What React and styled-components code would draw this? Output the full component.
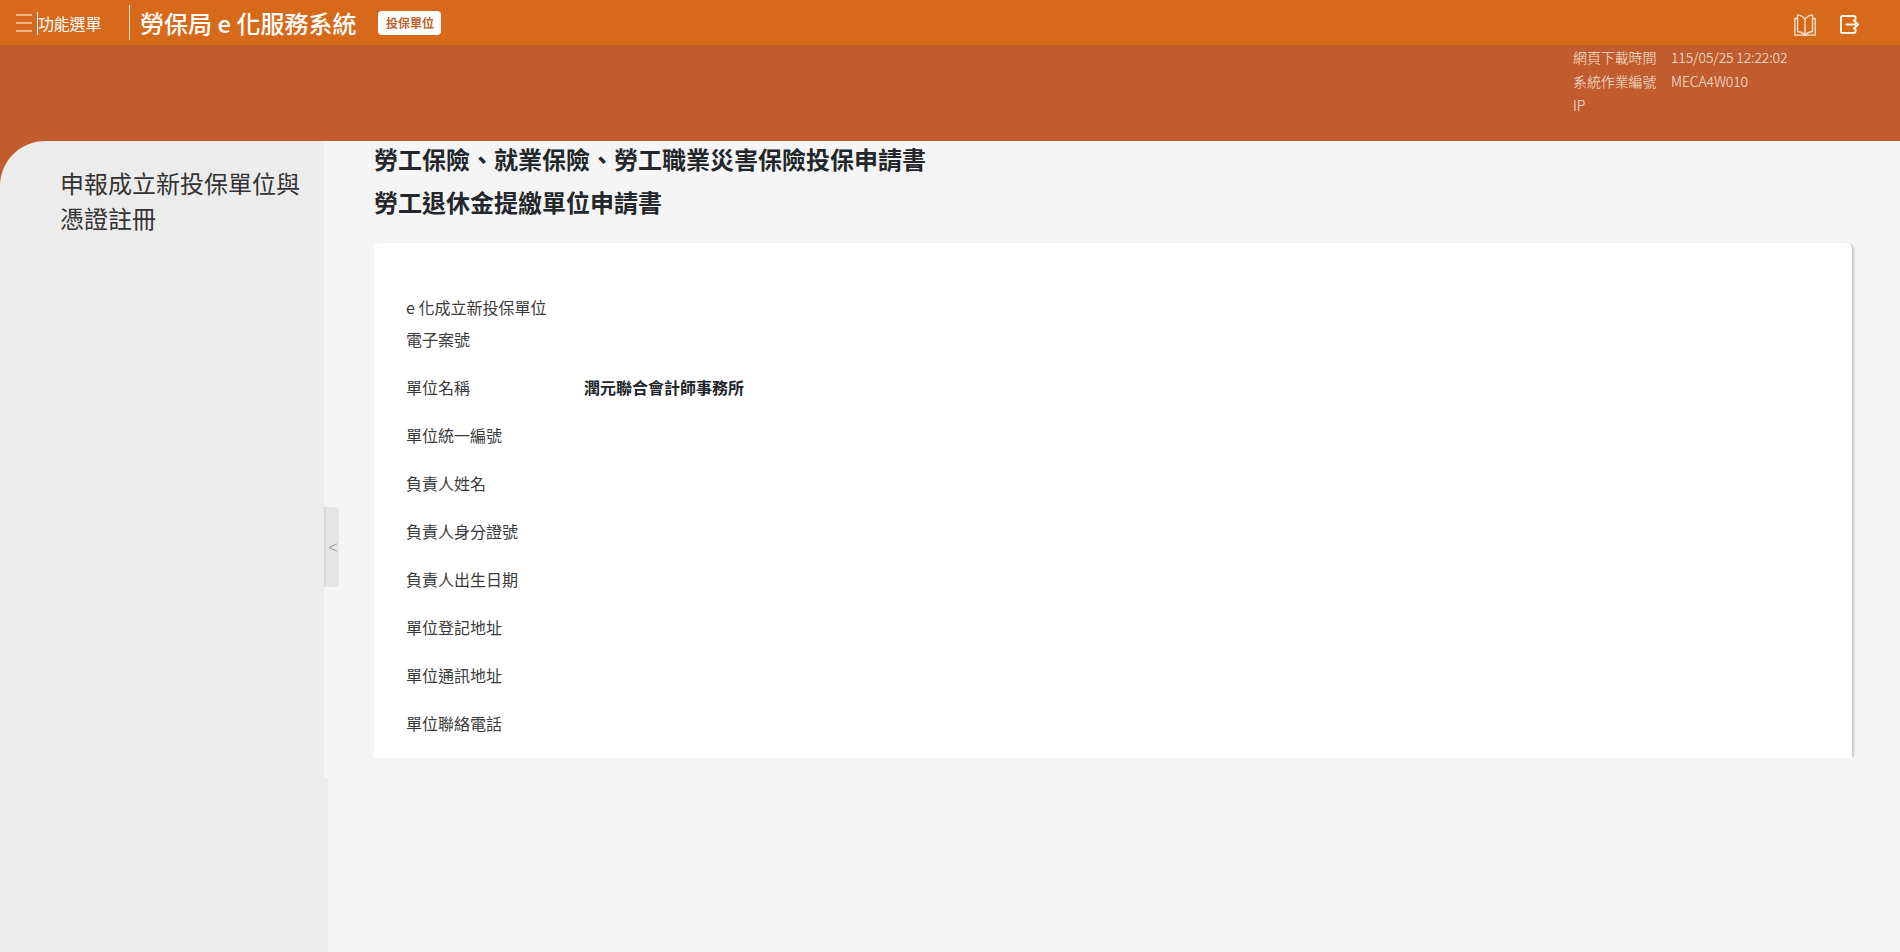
import styled, { createGlobalStyle } from "styled-components";

const rows = [
  { label: "單位名稱", value: "潤元聯合會計師事務所" },
  { label: "單位統一編號" },
  { label: "負責人姓名" },
  { label: "負責人身分證號" },
  { label: "負責人出生日期" },
  { label: "單位登記地址" },
  { label: "單位通訊地址" },
  { label: "單位聯絡電話" },
];

function App() {
  return (
    <>
      <GlobalStyle />
      <Page>
        <TopBar>
          <MenuIcon viewBox="0 0 16 18" fill="none" stroke="#fff" strokeWidth="1">
            <path d="M0 1h16M0 9h16M0 17h16" />
          </MenuIcon>
          <MenuLabel>功能選單</MenuLabel>
          <Divider />
          <SystemName>勞保局 e 化服務系統</SystemName>
          <Badge>投保單位</Badge>
          <TopActions>
            <svg width="22" height="22" viewBox="0 0 22 22" fill="none" stroke="#fde7d3" strokeWidth="1.3" strokeLinejoin="round">
              <path d="M11 5C9 2.500 6 1 3.500 .8V17.500C6 17.700 9 19 11 21C13 19 16 17.700 18.500 17.500V.8C16 1 13 2.500 11 5Z" />
              <path d="M11 5V21" />
              <path d="M3.500 4.500H.8V21.200H21.200V4.500H18.500" />
            </svg>
            <svg width="19" height="19" viewBox="0 0 19 19" fill="none" stroke="#fff3e6" strokeWidth="2" strokeLinecap="round" strokeLinejoin="round">
              <path d="M15.500 4.500V2.500A1.500 1.500 0 0 0 14 1H2.500A1.500 1.500 0 0 0 1 2.500V16.500A1.500 1.500 0 0 0 2.500 18H14A1.500 1.500 0 0 0 15.500 16.500V14.500" />
              <path d="M6.500 9.500H18M14 5.500L18 9.500L14 13.500" />
            </svg>
          </TopActions>
        </TopBar>
        <InfoBand>
          <InfoGrid>
            <span>網頁下載時間</span>
            <span>115/05/25 12:22:02</span>
            <span>系統作業編號</span>
            <span>MECA4W010</span>
            <span>IP</span>
            <span />
          </InfoGrid>
        </InfoBand>
        <Main>
          <SidebarSlot>
            <Sidebar>
              <SidebarTitle>申報成立新投保單位與憑證註冊</SidebarTitle>
            </Sidebar>
          </SidebarSlot>
          <Content>
            <CollapseButton type="button">&lt;</CollapseButton>
            <Heading>勞工保險、就業保險、勞工職業災害保險投保申請書</Heading>
            <Heading>勞工退休金提繳單位申請書</Heading>
            <Card>
              <Row>
                <Label>
                  e 化成立新投保單位
                  <br />
                  電子案號
                </Label>
              </Row>
              {rows.map(row => (
                <Row key={row.label}>
                  <Label>{row.label}</Label>
                  {row.value && <Value>{row.value}</Value>}
                </Row>
              ))}
            </Card>
          </Content>
        </Main>
      </Page>
    </>
  );
}

const GlobalStyle = createGlobalStyle`
  html, body {
    margin: 0;
    padding: 0;
    background-color: #f5f5f5;
  }

  body {
    font-family: "Noto Sans CJK TC", "Noto Sans", sans-serif;
    color: #333;
  }

  * {
    box-sizing: border-box;
  }
`;

const Page = styled.div`
  width: 1900px;
  height: 952px;
  overflow: hidden;
  background-color: #f5f5f5;
`;

const TopBar = styled.header`
  display: flex;
  align-items: center;
  height: 45px;
  padding: 0 41px 0 16px;
  background-color: #d76a1a;
  color: #fff;
`;

const MenuIcon = styled.svg`
  width: 16px;
  height: 18px;
  margin-right: 5px;
`;

const MenuLabel = styled.div`
  width: 64px;
  height: 23px;
  margin-top: 1px;
  border-left: 1px solid #fff;
  font-size: 16px;
  letter-spacing: -0.2px;
  line-height: 23px;
  white-space: nowrap;
`;

const Divider = styled.div`
  width: 1px;
  height: 35px;
  margin: 0 10px 0 28px;
  background-color: #fbe3d0;
`;

const SystemName = styled.div`
  font-size: 24px;
  font-weight: 500;
  white-space: nowrap;
`;

const Badge = styled.div`
  width: 63px;
  height: 24px;
  margin-left: 22px;
  border-radius: 4px;
  background-color: #fff;
  color: #c0622c;
  font-size: 12px;
  font-weight: 700;
  line-height: 24px;
  text-align: center;
`;

const TopActions = styled.div`
  display: flex;
  align-items: center;
  gap: 24px;
  margin-top: 4px;
  margin-left: auto;
`;

const InfoBand = styled.div`
  display: flex;
  justify-content: flex-end;
  height: 96px;
  background-color: #c05c2e;
`;

const InfoGrid = styled.div`
  display: grid;
  grid-template-columns: 84px 1fr;
  grid-auto-rows: 24px;
  column-gap: 14px;
  width: 327px;
  color: #fde8dc;
  font-size: 14px;
  font-weight: 300;
  letter-spacing: -0.12px;
  line-height: 24px;
`;

const Main = styled.main`
  display: flex;
  height: 811px;
`;

const SidebarSlot = styled.div`
  flex: 0 0 328px;
  background-color: #c05c2e;
`;

const Sidebar = styled.aside`
  height: 100%;
  padding: 24px 24px 0 60px;
  border-top-left-radius: 45px;
  background-color: #ececec;
`;

const SidebarTitle = styled.h1`
  margin: 0;
  color: #333;
  font-size: 24px;
  font-weight: 400;
  line-height: 35px;
`;

const Content = styled.section`
  position: relative;
  flex: 1;
  height: 637px;
  margin-left: -4px;
  padding: 0 48px 0 50px;
  background-color: #f5f5f5;
`;

const CollapseButton = styled.button`
  position: absolute;
  top: 366px;
  left: 0;
  width: 15px;
  height: 80px;
  padding: 2px 0 0 1px;
  border: 0;
  border-left: 2px solid #d8d8d8;
  border-radius: 0 4px 4px 0;
  background-color: #e6e6e6;
  color: #a8a8a8;
  font-family: "Liberation Sans", sans-serif;
  font-size: 16px;
  line-height: 1;
`;

const Heading = styled.h2`
  margin: 0 0 7px;
  color: #23272b;
  font-size: 24px;
  font-weight: 700;
  line-height: 36px;
`;

const Card = styled.div`
  height: 515px;
  margin-top: 23px;
  padding: 40px 32px 10px 32px;
  border-radius: 6px 6px 0 0;
  background-color: #fff;
  box-shadow: 3px 0 2px -1px #c8c8c8;
`;

const Row = styled.div`
  display: flex;
  padding: 8px 0;
  font-size: 16px;
  line-height: 32px;
`;

const Label = styled.div`
  flex: 0 0 178px;
  color: #3a3a3a;
`;

const Value = styled.div`
  color: #212529;
  font-weight: 700;
`;

export default App;
